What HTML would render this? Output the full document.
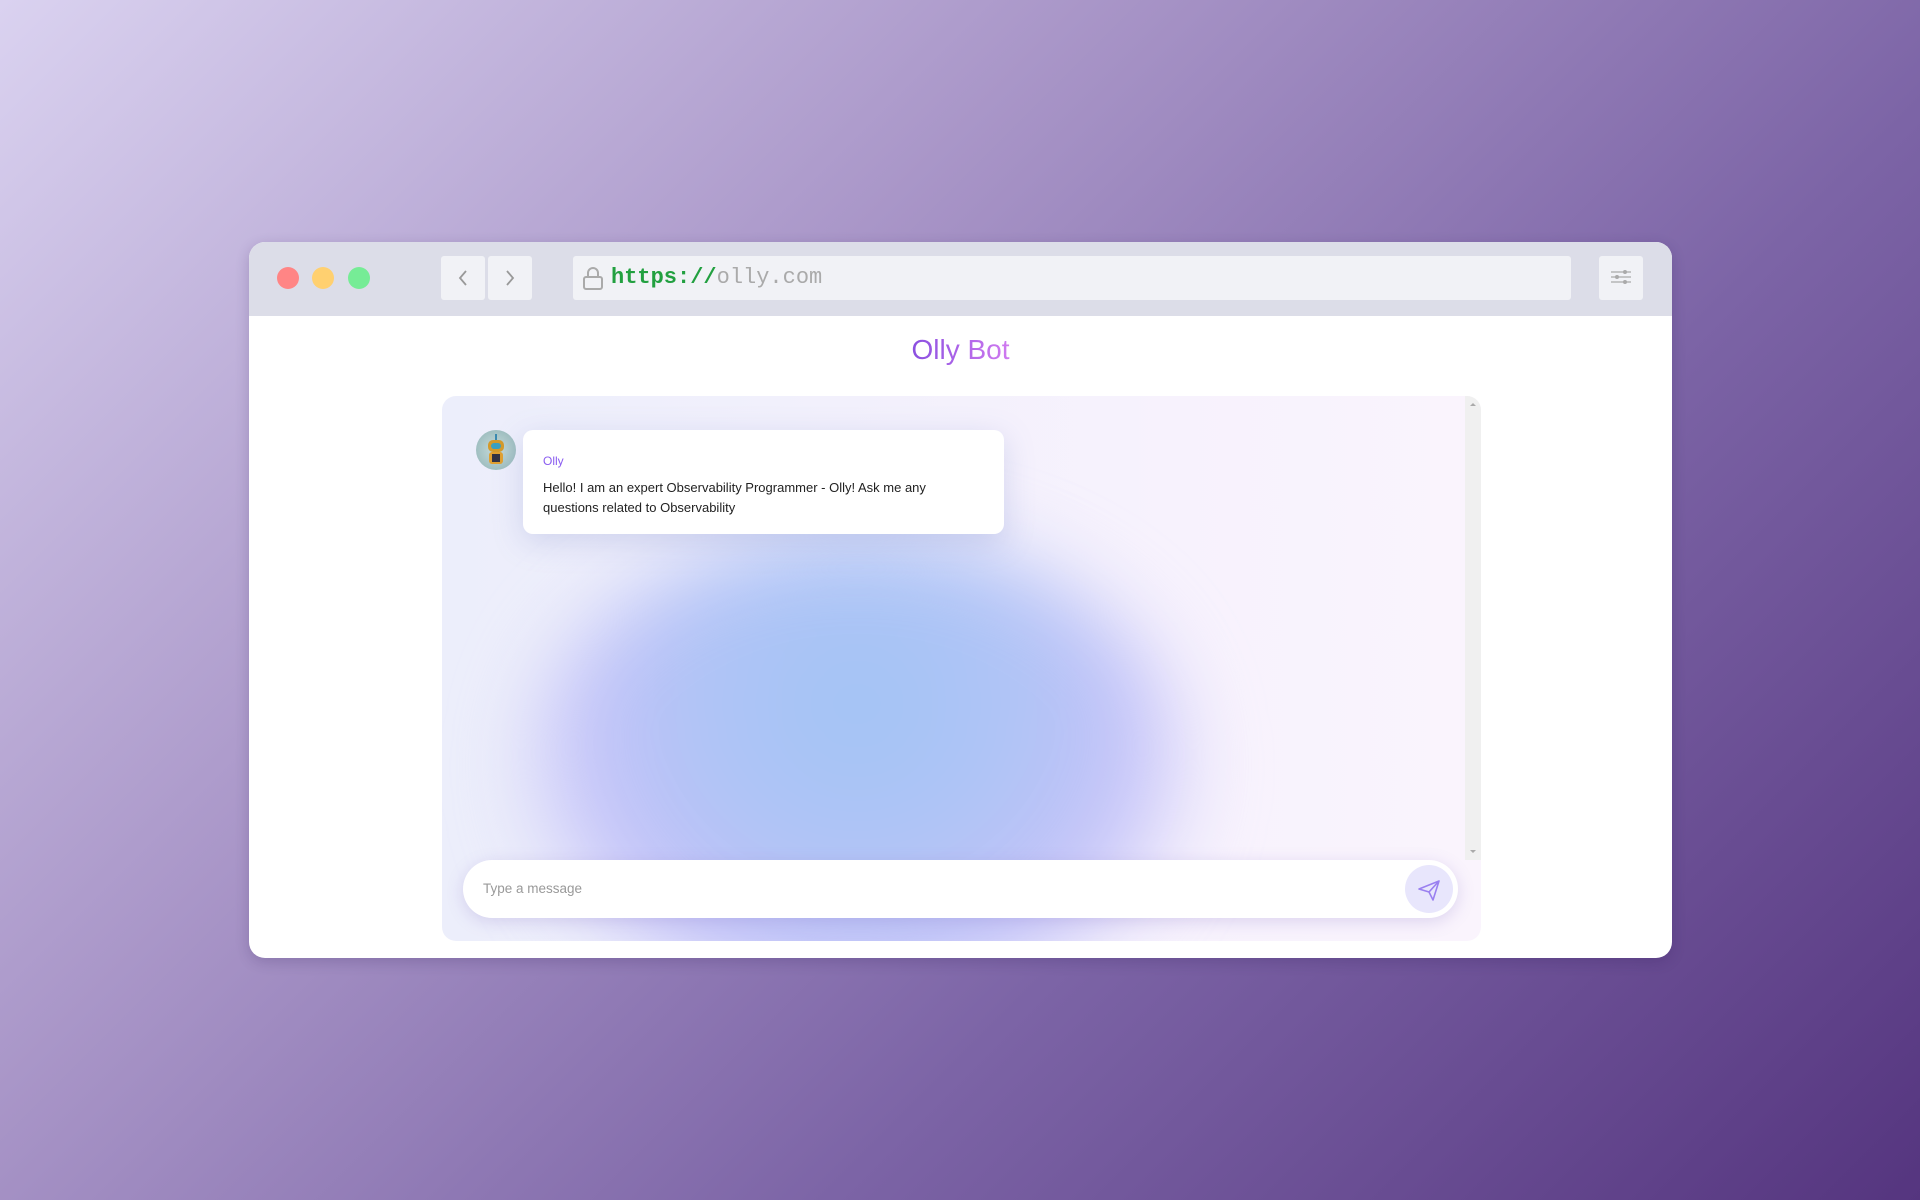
<!DOCTYPE html>
<html><head><style>
*{margin:0;padding:0;box-sizing:border-box}
body{width:1920px;height:1200px;overflow:hidden;font-family:"Liberation Sans",sans-serif;background:linear-gradient(135deg,#dad2f0 0%,#a996c8 35%,#7c64a6 65%,#55357f 100%);position:relative}
.win{position:absolute;left:249px;top:242px;width:1423px;height:716px;background:#fff;border-radius:16px;overflow:hidden;box-shadow:0 4px 14px rgba(40,20,80,.2)}
.bar{height:74px;background:#dcdde8;position:relative}
.dot{position:absolute;top:25px;width:22px;height:22px;border-radius:50%}
.btn{position:absolute;top:14px;height:44px;background:#f1f2f6;border-radius:3px}
.url{position:absolute;left:324px;top:14px;width:998px;height:44px;background:#f1f2f6;border-radius:3px;font-family:"Liberation Mono",monospace;font-size:22px;line-height:44px;padding-left:38px;color:#aaa}
.title{position:absolute;top:92px;left:0;width:100%;text-align:center;font-size:28px;font-weight:300}
.title span{background:linear-gradient(90deg,#8a4fe0,#d07af0);-webkit-background-clip:text;color:transparent}
.panel{position:absolute;left:193px;top:154px;width:1039px;height:545px;border-radius:14px;overflow:hidden;background:linear-gradient(90deg,#eceefb,#f7f2fd 70%,#faf4fd)}
.blob{position:absolute;left:85px;top:140px;width:660px;height:480px;border-radius:50%;background:radial-gradient(ellipse at 50% 35%,#a2c4f5 0%,#b0c4f6 35%,#c4c2f8 60%,rgba(210,200,250,0) 80%);filter:blur(40px)}
.scroll{position:absolute;right:0;top:0;width:16px;height:464px;background:#f0f0f0}
.bubble{position:absolute;left:81px;top:34px;width:481px;height:104px;background:#fff;border-radius:10px;box-shadow:0 8px 30px rgba(120,130,200,.25);padding:21px 20px;font-size:13px;color:#222;line-height:20px}
.av{position:absolute;left:34px;top:34px;width:40px;height:40px;border-radius:50%;background:radial-gradient(circle,#c8dcdc,#8fb3b5)}
.input{position:absolute;left:21px;top:464px;width:995px;height:58px;background:#fff;border-radius:29px;box-shadow:0 4px 16px rgba(140,120,200,.25);font-size:13.5px;color:#999;line-height:58px;padding-left:20px}
.send{position:absolute;right:5px;top:5px;width:48px;height:48px;border-radius:50%;background:#e8e6fc}
</style></head><body>
<div class="win">
 <div class="bar">
  <div class="dot" style="left:28px;background:#ff8585"></div>
  <div class="dot" style="left:63px;background:#ffd070"></div>
  <div class="dot" style="left:99px;background:#76ec96"></div>
  <div class="btn" style="left:192px;width:44px"><svg width="44" height="44"><path d="M25 15l-6 7 6 7" stroke="#999" stroke-width="1.8" fill="none"/></svg></div>
  <div class="btn" style="left:239px;width:44px"><svg width="44" height="44"><path d="M19 15l6 7-6 7" stroke="#999" stroke-width="1.8" fill="none"/></svg></div>
  <div class="url"><svg style="position:absolute;left:9px;top:10px" width="22" height="24"><path d="M6 11V7a5 5 0 0110 0v4" stroke="#aaa" stroke-width="2" fill="none"/><rect x="2" y="11" width="18" height="12" rx="2" stroke="#aaa" stroke-width="2" fill="none"/></svg><span style="color:#22a040;font-weight:bold">https://</span>olly.com</div>
  <div class="btn" style="left:1350px;width:44px"><svg width="44" height="44"><g stroke="#aaa" stroke-width="1.2"><path d="M12 16h20M12 21h20M12 26h20"/></g><g fill="#aaa"><circle cx="26" cy="16" r="2"/><circle cx="18" cy="21" r="2"/><circle cx="26" cy="26" r="2"/></g></svg></div>
 </div>
 <div class="title"><span>Olly Bot</span></div>
 <div class="panel">
  <div class="blob"></div>
  <div class="scroll"><svg width="16" height="464"><path d="M5 10l3-3 3 3z M5 454l3 3 3-3z" fill="#aaa"/></svg></div>
  <div class="av"><svg width="40" height="40"><rect x="12" y="10" width="16" height="12" rx="5" fill="#d49a2a"/><rect x="15" y="13" width="10" height="6" rx="3" fill="#3aa0c0"/><rect x="13" y="22" width="14" height="12" rx="3" fill="#e0a030"/><rect x="16" y="24" width="8" height="8" fill="#334"/><line x1="20" y1="4" x2="20" y2="10" stroke="#3a8ab0" stroke-width="2"/></svg></div>
  <div class="bubble"><div style="color:#8a5cf0;font-size:12px;margin-bottom:7px">Olly</div>Hello! I am an expert Observability Programmer - Olly! Ask me any questions related to Observability</div>
  <div class="input">Type a message<div class="send"><svg width="48" height="48"><path d="M14 24l20-8-6 19-4-8z M24 27l10-11" stroke="#9a80f0" stroke-width="1.6" fill="none" stroke-linejoin="round"/></svg></div></div>
 </div>
</div>
</body></html>
